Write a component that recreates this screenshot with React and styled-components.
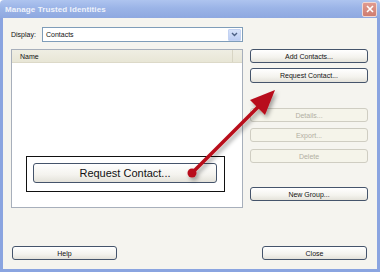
import styled, { createGlobalStyle } from "styled-components";

const GlobalStyle = createGlobalStyle`
  html, body {
    margin: 0;
    padding: 0;
    background: #ffffff;
  }
  body {
    font-family: "Liberation Sans", Arial, sans-serif;
  }
`;

const Window = styled.div`
  position: relative;
  width: 380px;
  height: 272px;
  display: flex;
  flex-direction: column;
  overflow: hidden;
`;

const TitleBar = styled.div`
  height: 18px;
  flex: none;
  display: flex;
  align-items: center;
  justify-content: space-between;
  padding: 0 3px 0 5px;
  background: linear-gradient(#aec4ef, #9bb4e7 45%, #8ea8e0);
  border-radius: 4px 4px 0 0;
`;

const Title = styled.span`
  color: #eef2fb;
  font-size: 8px;
  font-weight: bold;
  letter-spacing: 0.1px;
`;

const CloseX = styled.div`
  width: 13px;
  height: 13px;
  border: 1px solid #f1d8d3;
  border-radius: 2px;
  background: linear-gradient(#e09a8f, #cf7d70);
  display: flex;
  align-items: center;
  justify-content: center;
`;

const Frame = styled.div`
  flex: 1;
  display: flex;
  flex-direction: column;
  background: #f5f4ef;
  border: 3px solid #8aa4e0;
  border-top: none;
  padding: 9px 9px 9px 8px;
`;

const Main = styled.div`
  display: flex;
  gap: 7px;
`;

const LeftCol = styled.div`
  position: relative;
  width: 232px;
  display: flex;
  flex-direction: column;
  gap: 7px;
`;

const DisplayRow = styled.div`
  display: flex;
  align-items: center;
  height: 15px;
`;

const Label = styled.span`
  width: 31px;
  font-size: 7px;
  color: #111;
`;

const Select = styled.div`
  flex: 1;
  height: 15px;
  box-sizing: border-box;
  border: 1px solid #7f9db9;
  background: #fff;
  display: flex;
  align-items: center;
  justify-content: space-between;
  padding: 0 1px 0 3px;
  font-size: 7px;
  color: #111;
`;

const DropButton = styled.div`
  width: 13px;
  height: 12px;
  border-radius: 1px;
  background: linear-gradient(#d6e2fa, #bccdf3);
  border: 1px solid #c3d2f2;
  box-sizing: border-box;
  display: flex;
  align-items: center;
  justify-content: center;
`;

const ListBox = styled.div`
  height: 159px;
  box-sizing: border-box;
  border: 1px solid #a7afbb;
  background: #fff;
`;

const Header = styled.div`
  height: 12px;
  display: flex;
  background: linear-gradient(#efeee3, #e8e6d6);
  border-bottom: 1px solid #dcd9c8;
`;

const HeaderCell = styled.div`
  width: ${(p) => p.$w}px;
  display: flex;
  align-items: center;
  padding-left: 8px;
  box-sizing: border-box;
  border-right: 1px solid #d8d5c4;
  font-size: 7px;
  color: #111;
`;

const RightCol = styled.div`
  width: 118px;
  display: flex;
  flex-direction: column;
  padding-top: 22px;
`;

const Button = styled.div`
  height: ${(p) => p.$h || 14}px;
  margin-top: ${(p) => p.$mt || 0}px;
  box-sizing: border-box;
  width: ${(p) => (p.$w ? p.$w + "px" : "100%")};
  border: 1px solid ${(p) => (p.$disabled ? "#cfcdc2" : "#45546b")};
  border-radius: 3px;
  background: ${(p) =>
    p.$disabled
      ? "#f5f4ea"
      : "linear-gradient(#ffffff, #f4f3ee 60%, #e4e2da)"};
  color: ${(p) => (p.$disabled ? "#b2afa2" : "#111")};
  font-size: ${(p) => p.$fs || 7}px;
  display: flex;
  align-items: center;
  justify-content: center;
`;

const Footer = styled.div`
  margin-top: auto;
  display: flex;
  justify-content: space-between;
  padding: 0 1px 0 1px;
`;

const Callout = styled.div`
  position: absolute;
  left: 15px;
  top: 129px;
  width: 199px;
  height: 36px;
  box-sizing: border-box;
  border: 1.5px solid #111;
  background: #fff;
  padding: 6px 0 0 6px;
`;

const ArrowLayer = styled.svg`
  position: absolute;
  left: 0;
  top: 0;
  pointer-events: none;
`;

export default function App() {
  return (
    <Window>
      <GlobalStyle />
      <TitleBar>
        <Title>Manage Trusted Identities</Title>
        <CloseX>
          <svg width="8" height="8" viewBox="0 0 8 8">
            <path d="M1 1L7 7M7 1L1 7" stroke="#fff" strokeWidth="1.6" />
          </svg>
        </CloseX>
      </TitleBar>
      <Frame>
        <Main>
          <LeftCol>
            <DisplayRow>
              <Label>Display:</Label>
              <Select>
                <span>Contacts</span>
                <DropButton>
                  <svg width="7" height="5" viewBox="0 0 7 5">
                    <path d="M1 1L3.5 3.5L6 1" fill="none" stroke="#4d6185" strokeWidth="1.4" />
                  </svg>
                </DropButton>
              </Select>
            </DisplayRow>
            <ListBox>
              <Header>
                <HeaderCell $w={221}>Name</HeaderCell>
              </Header>
            </ListBox>
            <Callout>
              <Button $w={184} $h={20} $fs={11}>
                Request Contact...
              </Button>
            </Callout>
          </LeftCol>
          <RightCol>
            <Button>Add Contacts...</Button>
            <Button $mt={5} $h={15}>Request Contact...</Button>
            <Button $mt={25} $disabled>Details...</Button>
            <Button $mt={6} $disabled>Export...</Button>
            <Button $mt={7} $disabled>Delete</Button>
            <Button $mt={24}>New Group...</Button>
          </RightCol>
        </Main>
        <Footer>
          <Button $w={105}>Help</Button>
          <Button $w={105}>Close</Button>
        </Footer>
      </Frame>
      <ArrowLayer width="380" height="272" viewBox="0 0 380 272">
        <defs>
          <filter id="shadow" x="-20%" y="-20%" width="140%" height="140%">
            <feDropShadow dx="2" dy="3" stdDeviation="2" floodColor="#000" floodOpacity="0.35" />
          </filter>
        </defs>
        <g filter="url(#shadow)">
          <line x1="192" y1="173" x2="260" y2="105" stroke="#b8101b" strokeWidth="3.5" strokeLinecap="round" />
          <circle cx="192" cy="173" r="4.5" fill="#b8101b" />
          <polygon points="275,90 250,100 265,115" fill="#b8101b" />
        </g>
      </ArrowLayer>
    </Window>
  );
}
